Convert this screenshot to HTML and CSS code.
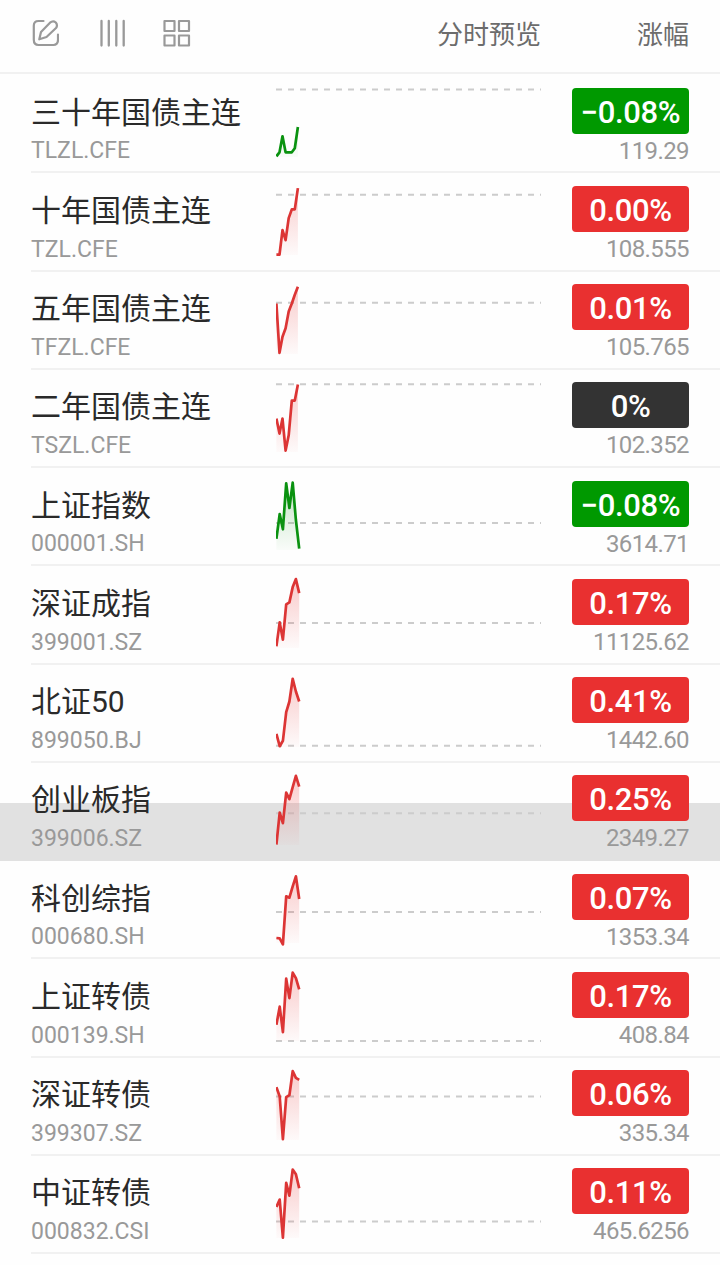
FILE: index.html
```html
<!DOCTYPE html>
<html lang="zh-CN">
<head>
    <meta charset="UTF-8">
    <meta name="viewport" content="width=device-width, initial-scale=1.0">
    <title>自选行情</title>
    <link rel="stylesheet" href="styles.css">
</head>
<body>
    <header class="toolbar">
        <div class="tools">
            <svg class="icon" width="28" height="28" viewBox="0 0 28 28">
                <path d="M12.500 2H7.500Q2.800 2 2.800 6.700V20.800Q2.800 26 7.500 26H22.500Q27 26 27 20.800V15.500"/>
                <path d="M8.300 20.300 10 13 19 3.700Q22 1.200 24.800 3.500 27 6.300 25 9L15.500 18Z"/>
            </svg>
            <svg class="icon icon-bars" width="28" height="28" viewBox="0 0 28 28">
                <path d="M2.500 2V26.500M9.800 2V26.500M17.300 2V26.500M24.700 2V26.500"/>
            </svg>
            <svg class="icon icon-grid" width="28" height="28" viewBox="0 0 28 28">
                <path d="M1.500 2H11.500V12H1.500ZM16 2H26V12H16ZM1.500 16.500H11.500V26.500H1.500ZM16 16.500H26V26.500H16Z"/>
            </svg>
        </div>
        <div class="col-preview">分时预览</div>
        <div class="col-change">涨幅</div>
    </header>

    <main id="list" class="list"></main>

    <script src="script.js"></script>
</body>
</html>
```
FILE: styles.css
```css
* {
    box-sizing: border-box;
}

body {
    margin: 0;
    height: 1265px;
    overflow: hidden;
    background-color: #fefefe;
    font-family: Roboto, 'Noto Sans CJK SC', sans-serif;
}

.toolbar {
    display: flex;
    align-items: center;
    height: 74px;
    padding: 0 31px 7px;
    border-bottom: 2px solid #f1f1f1;
    color: #6c6c6c;
    font-size: 26px;
    line-height: 36px;
}

.tools {
    display: flex;
    flex: 1;
    align-items: center;
}

.icon {
    fill: none;
    stroke: #999;
    stroke-width: 2.2;
    stroke-linecap: round;
    stroke-linejoin: round;
}

.icon-bars {
    margin-left: 40px;
    stroke-width: 2.3;
}

.icon-grid {
    margin-left: 36px;
}

.col-preview,
.col-change {
    padding-top: 5px;
}

.col-change {
    width: 148px;
    text-align: right;
}

.list {
    padding-top: 1px;
}

.row {
    height: 98.25px;
    padding-left: 31px;
}

.row.pressed {
    background: linear-gradient(#fefefe 40px, #e1e1e1 40px);
}

.row-body {
    display: flex;
    height: 100%;
    padding-right: 31px;
    border-bottom: 2px solid #f1f1f1;
}

.pressed .row-body {
    border-bottom-color: #e1e1e1;
}

.stock {
    width: 245px;
    padding-top: 17.7px;
}

.name {
    color: #2a2a2a;
    font-size: 30px;
    line-height: 40px;
    white-space: nowrap;
}

.code {
    margin-top: 4.8px;
    color: #999;
    font-size: 23px;
    line-height: 28px;
}

.chart {
    display: block;
    width: 265px;
    height: 96px;
}

.base {
    stroke: #ccc;
    stroke-width: 2;
    stroke-dasharray: 6;
}

.line {
    fill: none;
    stroke: #dc3535;
    stroke-width: 2.7;
    stroke-linejoin: round;
}

.down .line {
    stroke: #0a9210;
}

.quote {
    margin-left: auto;
    width: 117px;
    padding-top: 12.6px;
    text-align: right;
}

.badge {
    height: 46px;
    border-radius: 4px;
    background-color: #e93030;
    color: #fff;
    font-size: 31px;
    font-weight: 500;
    line-height: 50px;
    text-align: center;
    letter-spacing: -0.4px;
}

.down .badge {
    background-color: #009900;
}

.flat .badge {
    background-color: #333;
}

.price {
    color: #999;
    font-size: 24px;
    line-height: 34px;
    letter-spacing: -0.6px;
}
```
FILE: script.js
```js
// y values are pixels inside the row, base is the previous close line
const stocks = [
    { name: '三十年国债主连', code: 'TLZL.CFE', change: '−0.08%', price: '119.29', state: 'down', base: 14.6, width: 21.5, y: [81.3, 77.3, 61.3, 77.3, 77.3, 77.3, 73.3, 52] },
    { name: '十年国债主连', code: 'TZL.CFE', change: '0.00%', price: '108.555', state: 'up', base: 21.8, width: 21.5, y: [81.7, 81.7, 57.1, 67.1, 45.1, 36.4, 36.4, 15.1] },
    { name: '五年国债主连', code: 'TFZL.CFE', change: '0.01%', price: '105.765', state: 'up', base: 30.8, width: 21.5, y: [31.5, 80.8, 64.8, 56.2, 39.5, 31.5, 22.8, 14.8] },
    { name: '二年国债主连', code: 'TSZL.CFE', change: '0%', price: '102.352', state: 'flat', base: 14.3, width: 21.5, y: [48.6, 63.6, 48.6, 80.6, 65.3, 30.6, 30.6, 14.6] },
    { name: '上证指数', code: '000001.SH', change: '−0.08%', price: '3614.71', state: 'down', base: 55, width: 22.8, y: [70.7, 46, 61.3, 15.3, 40, 14.7, 52, 80.7] },
    { name: '深证成指', code: '399001.SZ', change: '0.17%', price: '11125.62', state: 'up', base: 57.1, width: 22.8, y: [80.4, 56.4, 73.7, 38.4, 36.4, 21.1, 13.1, 27.1] },
    { name: '北证50', code: '899050.BJ', change: '0.41%', price: '1442.60', state: 'up', base: 80.7, width: 22.8, y: [68.8, 81.2, 75.8, 47.2, 36.5, 13.8, 26.5, 36.5] },
    { name: '创业板指', code: '399006.SZ', change: '0.25%', price: '2349.27', state: 'up pressed', base: 50.3, width: 22.8, y: [81.6, 49.6, 60.2, 29.6, 36.2, 24.2, 12.9, 23.6] },
    { name: '科创综指', code: '000680.SH', change: '0.07%', price: '1353.34', state: 'up', base: 51, width: 22.8, y: [77, 77.3, 83.3, 35.3, 36.7, 25.3, 15.3, 38] },
    { name: '上证转债', code: '000139.SH', change: '0.17%', price: '408.84', state: 'up', base: 82.1, width: 22.8, y: [65.7, 47.7, 73.1, 19.7, 39.1, 13.7, 19.1, 30.4] },
    { name: '深证转债', code: '399307.SZ', change: '0.06%', price: '335.34', state: 'up', base: 38.5, width: 22.8, y: [29.2, 38.5, 81.2, 39.2, 37.2, 13.2, 19.8, 21.8] },
    { name: '中证转债', code: '000832.CSI', change: '0.11%', price: '465.6256', state: 'up', base: 65.4, width: 22.8, y: [50.9, 43.6, 81.6, 26.9, 39.6, 13.6, 18.2, 32.2] }
];

function drawChart(stock, id) {
    const step = stock.width / (stock.y.length - 1);
    const points = stock.y.map((y, i) => (0.4 + i * step).toFixed(1) + ',' + y).join(' ');
    const color = stock.state === 'down' ? '#0a9210' : '#e93030';
    return `
        <svg class="chart" viewBox="0 0 265 96">
            <defs>
                <linearGradient id="fill${id}" gradientUnits="userSpaceOnUse" x1="0" y1="14" x2="0" y2="82">
                    <stop offset="0" stop-color="${color}" stop-opacity="0.25"/>
                    <stop offset="1" stop-color="${color}" stop-opacity="0.02"/>
                </linearGradient>
            </defs>
            <line class="base" x1="0" y1="${stock.base}" x2="265" y2="${stock.base}"/>
            <polygon fill="url(#fill${id})" points="0.4,82 ${points} ${0.4 + stock.width},82"/>
            <polyline class="line" points="${points}"/>
        </svg>`;
}

document.getElementById('list').innerHTML = stocks.map((stock, i) => `
    <div class="row ${stock.state}">
        <div class="row-body">
            <div class="stock">
                <div class="name">${stock.name}</div>
                <div class="code">${stock.code}</div>
            </div>
            ${drawChart(stock, i)}
            <div class="quote">
                <div class="badge">${stock.change}</div>
                <div class="price">${stock.price}</div>
            </div>
        </div>
    </div>`).join('');
```
